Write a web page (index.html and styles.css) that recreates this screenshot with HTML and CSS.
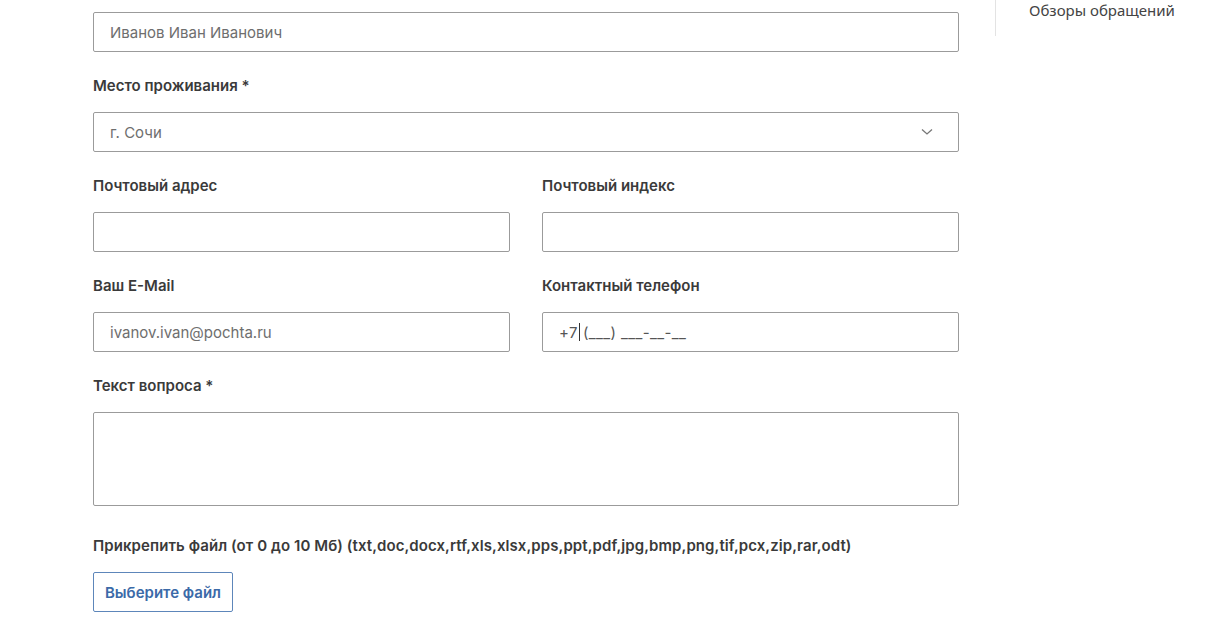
FILE: index.html
```html
<!DOCTYPE html>
<html lang="ru">
<head>
<meta charset="utf-8">
<title>Форма обращения</title>
<link rel="stylesheet" href="styles.css">
</head>
<body>
<div class="page">
  <form class="form">
    <div class="field">
      <div class="input"><span class="value">Иванов Иван Иванович</span></div>
    </div>
    <div class="field">
      <div class="label">Место проживания *</div>
      <div class="input select"><span class="value">г. Сочи</span>
        <svg class="chev" width="12" height="8" viewBox="0 0 12 8"><path d="M1 1.5 L6 6 L11 1.5" fill="none" stroke="#777" stroke-width="1.3"/></svg>
      </div>
    </div>
    <div class="row">
      <div class="field">
        <div class="label">Почтовый адрес</div>
        <div class="input"></div>
      </div>
      <div class="field">
        <div class="label">Почтовый индекс</div>
        <div class="input"></div>
      </div>
    </div>
    <div class="row">
      <div class="field">
        <div class="label">Ваш E-Mail</div>
        <div class="input"><span class="value">ivanov.ivan@pochta.ru</span></div>
      </div>
      <div class="field">
        <div class="label">Контактный телефон</div>
        <div class="input"><span class="value phone">+7<span class="caret"></span>(___) ___-__-__</span></div>
      </div>
    </div>
    <div class="field">
      <div class="label">Текст вопроса *</div>
      <div class="input textarea"></div>
    </div>
    <div class="field file">
      <div class="label">Прикрепить файл (от 0 до 10 Мб) (txt,doc,docx,rtf,xls,xlsx,pps,ppt,pdf,jpg,bmp,png,tif,pcx,zip,rar,odt)</div>
      <div class="btn">Выберите файл</div>
    </div>
  </form>
  <aside class="side">
    <div class="side-link">Обзоры обращений</div>
  </aside>
</div>
</body>
</html>
```
FILE: styles.css
```css
* { box-sizing: border-box; }
body {
  margin: 0;
  background: #fff;
  font-family: "Inter", "Noto Sans", sans-serif;
  color: #333;
}
.page {
  display: flex;
  align-items: flex-start;
  padding-left: 93px;
}
.form {
  width: 866px;
  padding-top: 12px;
  display: flex;
  flex-direction: column;
  gap: 24px;
}
.row {
  display: grid;
  grid-template-columns: 1fr 1fr;
  column-gap: 32px;
}
.field { display: flex; flex-direction: column; }
.label {
  font-size: 15px;
  font-weight: 600;
  line-height: 20px;
  color: #3a3a3a;
  margin-bottom: 16px;
}
.file .label { letter-spacing: 0.08px; }
.input {
  height: 40px;
  border: 1px solid #9b9b9b;
  border-radius: 2px;
  display: flex;
  align-items: center;
  padding: 0 16px;
}
.value {
  font-size: 15px;
  color: #6e6e6e;
}
.select { justify-content: space-between; padding-right: 25px; }
.chev { display: block; }
.phone { color: #555; display: inline-flex; align-items: center; letter-spacing: 0.4px; }
.caret {
  display: inline-block;
  width: 1px;
  height: 18px;
  background: #333;
  margin: 0 3px 0 1px;
}
.textarea { height: 94px; }
.file { margin-top: 6px; }
.btn {
  width: 140px;
  height: 40px;
  border: 1px solid #5d86ba;
  border-radius: 2px;
  color: #3b6aa8;
  font-size: 15px;
  font-weight: 600;
  display: flex;
  align-items: center;
  justify-content: center;
}
.side {
  margin-left: 36px;
  border-left: 1px solid #e3e3e3;
  height: 36px;
  padding-left: 33px;
}
.side-link {
  font-family: "Noto Sans", sans-serif;
  font-size: 15px;
  line-height: 20px;
  color: #444;
}
```
